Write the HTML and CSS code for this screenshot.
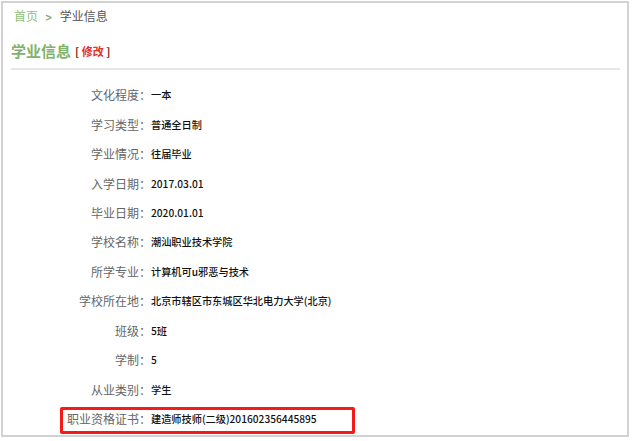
FILE: index.html
```html
<!DOCTYPE html>
<html lang="zh-CN">
<head>
    <meta charset="UTF-8">
    <title>学业信息</title>
    <link rel="stylesheet" href="styles.css">
</head>
<body>
    <div class="frame">
        <div class="crumbs">
            <a href="#">首页</a>
            <span class="sep">&gt;</span>
            <span class="here">学业信息</span>
        </div>

        <div class="title">
            <h2>学业信息</h2>
            <span class="edit">[ <a href="#">修改</a> ]</span>
        </div>

        <div class="info">
            <div class="row"><label>文化程度：</label><span>一本</span></div>
            <div class="row"><label>学习类型：</label><span>普通全日制</span></div>
            <div class="row"><label>学业情况：</label><span>往届毕业</span></div>
            <div class="row"><label>入学日期：</label><span>2017.03.01</span></div>
            <div class="row"><label>毕业日期：</label><span>2020.01.01</span></div>
            <div class="row"><label>学校名称：</label><span>潮汕职业技术学院</span></div>
            <div class="row"><label>所学专业：</label><span>计算机可u邪恶与技术</span></div>
            <div class="row"><label>学校所在地：</label><span>北京市辖区市东城区华北电力大学(北京)</span></div>
            <div class="row"><label>班级：</label><span>5班</span></div>
            <div class="row"><label>学制：</label><span>5</span></div>
            <div class="row"><label>从业类别：</label><span>学生</span></div>
            <div class="row"><label>职业资格证书：</label><span>建造师技师(二级)201602356445895</span></div>
        </div>

        <!-- annotation box round the last row -->
        <div class="mark"></div>
    </div>
</body>
</html>
```

FILE: styles.css
```css
body {
    margin: 0;
    font-family: "Microsoft YaHei", "Noto Sans CJK SC", "Noto Sans", sans-serif;
    font-size: 12px;
    color: #333;
    background: #fff;
}
.frame {
    position: relative;
    margin: 1px 4px 0 1px;
    height: 436px;
    box-sizing: border-box;
    border: 2px solid #d2d2d2;
}
.crumbs {
    height: 26px;
    line-height: 26px;
    padding-left: 11px;
    color: #555;
}
.crumbs a {
    color: #8dbd7c;
    text-decoration: none;
}
.crumbs .sep {
    display: inline-block;
    margin: 0 4px 0 3px;
    color: #8aa87e;
    font-family: "DejaVu Sans", sans-serif;
    font-weight: bold;
    font-size: 11px;
    transform: scaleX(0.8);
}
.title {
    display: flex;
    align-items: center;
    margin: 10px 7px 0 8px;
    padding-bottom: 5px;
    border-bottom: 2px solid #e6e6e6;
}
.title h2 {
    margin: 0;
    font-size: 15px;
    line-height: 24px;
    font-weight: bold;
    color: #7fb36c;
}
.edit {
    margin-left: 4px;
    font-size: 11px;
    font-weight: bold;
    color: #8a1a10;
}
.edit a {
    color: #e0321e;
    text-decoration: none;
}
.info {
    margin-top: 10px;
}
.row {
    display: flex;
    align-items: center;
    height: 29.45px;
}
.row label {
    width: 148px;
    flex-shrink: 0;
    text-align: right;
    color: #666;
}
.row span {
    font-size: 10.2px;
    font-weight: 500;
    color: #111;
}
.mark {
    position: absolute;
    left: 57px;
    top: 404px;
    width: 295px;
    height: 27px;
    box-sizing: border-box;
    border: 3px solid #f41a1a;
    border-radius: 2px;
}
```
